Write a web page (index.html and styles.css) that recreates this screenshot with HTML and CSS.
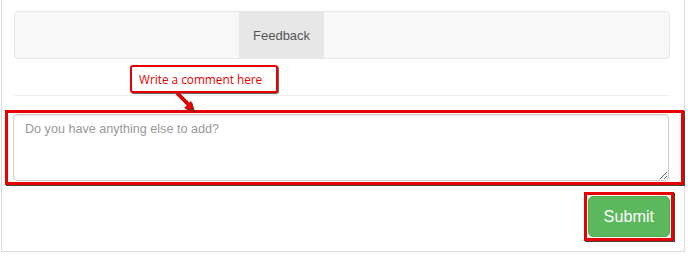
FILE: index.html
```html
<!DOCTYPE html>
<html>
<head>
<meta charset="utf-8">
<link rel="stylesheet" href="styles.css">
</head>
<body>
<div class="panel">
  <nav class="navbar">
    <span class="nav-item active">Feedback</span>
  </nav>
  <div class="annot-row">
    <div class="callout">Write a comment here</div>
    <svg class="arrow" width="30" height="26" viewBox="0 0 30 26">
      <g transform="translate(1,1)">
        <line x1="5" y1="3" x2="16" y2="14" stroke="#333" stroke-width="3.5"/>
        <polygon points="12,18 22,21 19,11" fill="#333"/>
      </g>
      <line x1="5" y1="3" x2="16" y2="14" stroke="#e50000" stroke-width="3.5"/>
      <polygon points="12,18 22,21 19,11" fill="#e50000"/>
    </svg>
  </div>
  <hr class="rule">
  <div class="mark mark-text">
    <textarea class="comment" placeholder="Do you have anything else to add?"></textarea>
  </div>
  <div class="actions">
    <div class="mark mark-btn">
      <button class="btn-submit">Submit</button>
    </div>
  </div>
</div>
</body>
</html>
```
FILE: styles.css
```css
html, body {
  margin: 0;
  padding: 0;
  background: #fff;
}
body {
  font-family: "Liberation Sans", Arial, sans-serif;
}
.panel {
  position: relative;
  margin-left: 1px;
  width: 656px;
  padding: 11px 14px 10px 12px;
  border: 1px solid #dddddd;
  border-top: none;
  box-shadow: 0 1px 1px rgba(0,0,0,0.05);
}
.navbar {
  display: flex;
  height: 46px;
  background: #f8f8f8;
  border: 1px solid #e7e7e7;
  border-radius: 4px;
}
.nav-item {
  margin-left: 224px;
  padding: 0 14px;
  line-height: 48px;
  font-size: 13px;
  color: #555;
}
.nav-item.active {
  background: #e7e7e7;
}
.annot-row {
  position: relative;
  height: 36px;
}
.callout {
  display: inline-block;
  margin-top: 6px;
  margin-left: 116px;
  height: 24px;
  padding: 0 14px 0 7px;
  line-height: 24px;
  border: 2px solid #e80000;
  border-radius: 3px;
  box-shadow: 1px 1px 1px rgba(0,0,0,0.65);
  background: #fff;
  color: #e80000;
  font-family: "Open Sans", "Noto Sans", sans-serif;
  font-size: 11.8px;
}
.arrow {
  position: absolute;
  left: 158px;
  top: 31px;
  z-index: 2;
}
.rule {
  margin: 0;
  border: none;
  border-top: 1px solid #eeeeee;
}
.mark {
  border: 3px solid #e80000;
  box-shadow: 1px 1px 0 #444;
}
.mark-text {
  margin: 14px -14px 0 -9px;
  padding: 1px 11px 1px 5px;
}
.comment {
  display: block;
  box-sizing: border-box;
  width: 656px;
  height: 67px;
  margin: 0;
  padding: 5px 11px;
  border: 1px solid #cccccc;
  border-radius: 4px;
  box-shadow: inset 0 1px 1px rgba(0,0,0,0.075);
  font-family: "Liberation Sans", Arial, sans-serif;
  font-size: 12.6px;
  line-height: 18px;
  color: #555;
  resize: vertical;
}
.comment::placeholder {
  color: #999999;
}
.actions {
  display: flex;
  justify-content: flex-end;
  margin-top: 7px;
}
.mark-btn {
  margin-right: -4px;
  padding: 1px;
}
.btn-submit {
  display: block;
  height: 41px;
  padding: 0 15px;
  border: 1px solid #4cae4c;
  border-radius: 5px;
  background: #5cb85c;
  color: #fff;
  font-family: "Liberation Sans", Arial, sans-serif;
  font-size: 16.2px;
}
```
